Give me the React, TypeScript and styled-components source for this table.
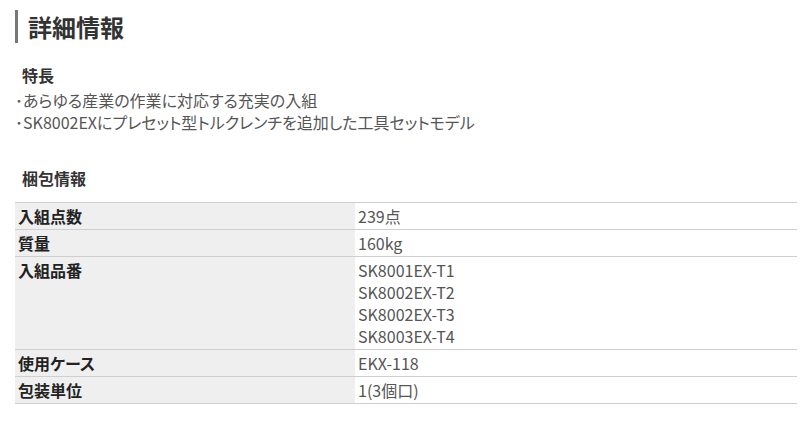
import styled, { createGlobalStyle } from 'styled-components'

const GlobalStyle = createGlobalStyle`
  body {
    margin: 0;
    background: #fff;
    font-family: "Noto Sans CJK JP", "Noto Sans", sans-serif;
    font-feature-settings: "palt" 1;
    color: #555;
  }
`

const Page = styled.div`
  width: 782px;
  padding: 10px 0 0 15px;
`

const Title = styled.h2`
  margin: 0;
  height: 33px;
  line-height: 33px;
  border-left: 3px solid #777;
  padding-left: 10px;
  font-size: 24px;
  font-weight: 700;
  color: #333;
`

const SectionHeading = styled.h3<{ $gap: number }>`
  margin: ${({ $gap }) => $gap}px 0 0;
  padding-left: 7px;
  font-size: 16px;
  line-height: 22px;
  font-weight: 700;
  color: #333;
`

const FeatureList = styled.ul`
  margin: 3px 0 0;
  padding: 0;
  list-style: none;
`

const FeatureItem = styled.li`
  font-size: 16px;
  line-height: 22px;
  color: #555;
`

const SpecTable = styled.table`
  margin-top: 13px;
  width: 782px;
  border-collapse: collapse;
  font-size: 16px;
  line-height: 22px;
`

const Row = styled.tr`
  border-top: 1px solid #cfcfcf;
  border-bottom: 1px solid #cfcfcf;
`

const Label = styled.th`
  width: 334px;
  padding: 2px 3px;
  background: #efefef;
  color: #222;
  font-weight: 700;
  text-align: left;
  vertical-align: top;
`

const Value = styled.td`
  padding: 2px 3px;
  color: #555;
  vertical-align: top;
`

const features = [
  'あらゆる産業の作業に対応する充実の入組',
  'SK8002EXにプレセット型トルクレンチを追加した工具セットモデル',
]

const specs: { label: string; values: string[] }[] = [
  { label: '入組点数', values: ['239点'] },
  { label: '質量', values: ['160kg'] },
  {
    label: '入組品番',
    values: ['SK8001EX-T1', 'SK8002EX-T2', 'SK8002EX-T3', 'SK8003EX-T4'],
  },
  { label: '使用ケース', values: ['EKX-118'] },
  { label: '包装単位', values: ['1(3個口)'] },
]

export default function App() {
  return (
    <>
      <GlobalStyle />
      <Page>
        <Title>詳細情報</Title>
        <SectionHeading $gap={21}>特長</SectionHeading>
        <FeatureList>
          {features.map((f) => (
            <FeatureItem key={f}>･{f}</FeatureItem>
          ))}
        </FeatureList>
        <SectionHeading $gap={34}>梱包情報</SectionHeading>
        <SpecTable>
          <tbody>
            {specs.map((s) => (
              <Row key={s.label}>
                <Label>{s.label}</Label>
                <Value>
                  {s.values.map((v) => (
                    <div key={v}>{v}</div>
                  ))}
                </Value>
              </Row>
            ))}
          </tbody>
        </SpecTable>
      </Page>
    </>
  )
}
